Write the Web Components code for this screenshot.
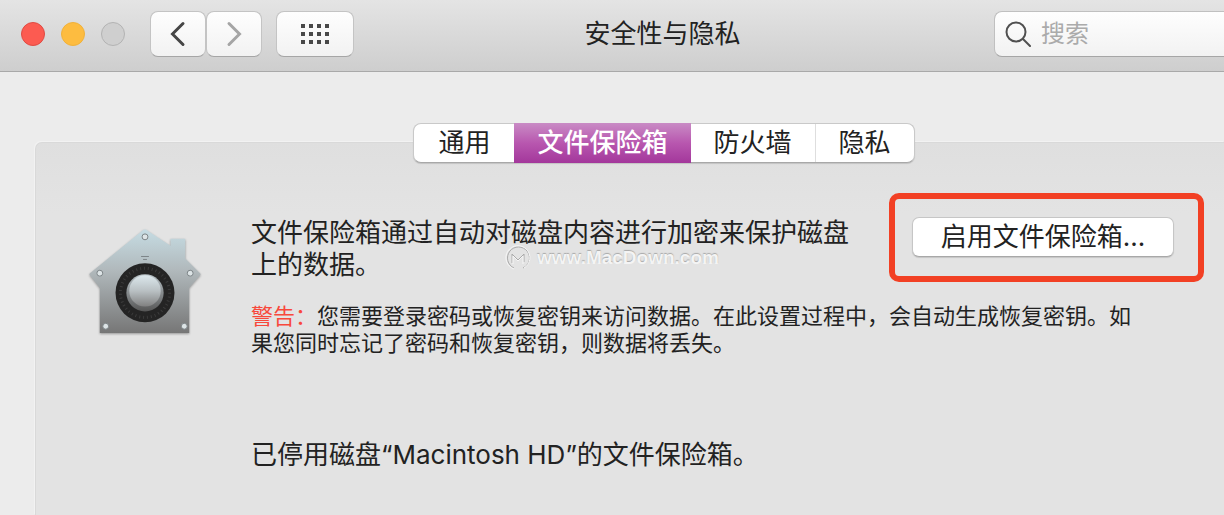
<!DOCTYPE html>
<html lang="zh-CN">
<head>
<meta charset="utf-8">
<title>安全性与隐私</title>
<style>
  html, body { height: 100%; margin: 0; }
  body { background: #ececec; color: #222; overflow: hidden; font: 26px/32px Inter, "Noto Sans CJK SC", sans-serif; }
</style>
</head>
<body>
<prefs-window>
  <prefs-toolbar slot="toolbar">安全性与隐私</prefs-toolbar>
  <prefs-tabs slot="tabs"></prefs-tabs>
  <filevault-pane></filevault-pane>
</prefs-window>

<template id="window-template">
  <style>
    :host { display: flex; flex-direction: column; min-height: 100vh; }
    .tabs { display: flex; justify-content: center; padding: 51px 0 0 104px; position: relative; z-index: 1; }
    main { flex: 1; display: flex; flex-direction: column; margin: -21px 0 0 35px; background: linear-gradient(#dfdfdf, #e3e3e3 70px); border: 1px solid #d9d9d9; border-width: 1px 0 0 1px; border-radius: 7px 0 0 0; box-shadow: -1px -1px 0 #f2f2f2; }
  </style>
  <slot name="toolbar"></slot>
  <div class="tabs"><slot name="tabs"></slot></div>
  <main><slot></slot></main>
</template>

<template id="toolbar-template">
  <style>
    :host { display: block; }
    header { display: flex; align-items: center; height: 72px; padding: 0 0 3px 21px; background: linear-gradient(#e4e4e4, #cecece); border-bottom: 1px solid #a9a9a9; box-sizing: border-box; }
    .lights { display: flex; gap: 16px; margin-right: 25px; }
    .lights button { width: 24px; height: 24px; padding: 0; border-radius: 50%; border: 1px solid #b3b3b3; background: #cfcfcf; }
    .lights .close { background: #fc5b51; border-color: #df4b43; }
    .lights .min { background: #fdbc40; border-color: #f0b13b; }
    .tool { display: grid; place-items: center; height: 46px; width: 56px; padding: 0; box-sizing: border-box; border: 1px solid #c4c4c4; border-bottom-color: #a6a6a6; border-radius: 8px; background: linear-gradient(#fefefe, #f2f2f2); }
    .all { width: 78px; margin-left: 14px; }
    h1 { flex: 1; margin: 0 23px 0 0; font-size: 26px; line-height: 32px; font-weight: 400; text-align: center; }
    .search { display: flex; align-items: center; gap: 10px; width: 230px; height: 46px; padding-left: 10px; box-sizing: border-box; border: 1px solid #c0c0c0; border-right: 0; border-bottom-color: #a6a6a6; border-radius: 8px 0 0 8px; background: linear-gradient(#fefefe, #f2f2f2); }
    input { flex: 1; min-width: 0; padding: 0; border: 0; outline: 0; background: none; color: #222; font: inherit; font-size: 24px; line-height: 32px; }
    input::placeholder { color: #ababab; opacity: 1; }
    svg { display: block; flex: none; }
  </style>
  <header>
    <div class="lights">
      <button class="close" aria-label="关闭"></button>
      <button class="min" aria-label="最小化"></button>
      <button disabled aria-label="缩放"></button>
    </div>
    <button class="tool" aria-label="后退"><svg width="16" height="26" viewBox="0 0 16 26" fill="none" stroke="#464646" stroke-width="3" stroke-linecap="round"><path d="M13 2.5 2.5 13 13 23.500"/></svg></button>
    <button class="tool" aria-label="前进"><svg width="16" height="26" viewBox="0 0 16 26" fill="none" stroke="#a5a5a5" stroke-width="3" stroke-linecap="round"><path d="M3 2.500 13.500 13 3 23.500"/></svg></button>
    <button class="tool all" aria-label="显示全部"><svg width="28" height="20" viewBox="0 0 28 20" fill="none" stroke="#484848" stroke-width="4" stroke-dasharray="4 4"><path d="M0 2h28M0 10h28M0 18h28"/></svg></button>
    <h1><slot></slot></h1>
    <label class="search">
      <svg width="26" height="26" viewBox="0 0 26 26" fill="none" stroke="#505050" stroke-width="2" stroke-linecap="round"><circle cx="11" cy="11" r="9.500"/><path d="m18 18 7 7"/></svg>
      <input type="text" placeholder="搜索" aria-label="搜索">
    </label>
  </header>
</template>

<template id="tabs-template">
  <style>
    :host { display: block; }
    div { display: flex; height: 38px; border: 1px solid #c9c9c9; border-bottom-color: #a8a8a8; border-radius: 8px; background: #fff; box-shadow: 0 1px 1px #0002; }
    button { padding: 0 24px; border: 0; background: none; color: #222; font: inherit; line-height: 38px; }
    button + button { padding: 0 23px; }
    button[aria-selected=true] { margin: -1px 0; background: linear-gradient(#c98bc5, #b857af 50%, #a3379b); color: #fff; font-weight: 500; line-height: 40px; }
    button:last-child { border-left: 1px solid #dedede; }
  </style>
  <div role="tablist">
    <button role="tab" aria-selected="false">通用</button>
    <button role="tab" aria-selected="true">文件保险箱</button>
    <button role="tab" aria-selected="false">防火墙</button>
    <button role="tab" aria-selected="false">隐私</button>
  </div>
</template>

<template id="pane-template">
  <style>
    :host { display: grid; grid-template-columns: 112px minmax(0, 1fr); column-gap: 50px; padding: 74px 50px 0 53px; align-items: start; }
    vault-icon { margin-top: 11px; }
    .intro { display: flex; justify-content: space-between; align-items: flex-start; gap: 50px; position: relative; }
    p { margin: 0; }
    .intro p { flex: 1; max-width: 612px; }
    .warning { margin: 22px 24px 82px 0; font-size: 22px; line-height: 27px; }
    strong { font-weight: 400; color: #f8483c; }
    site-mark { position: absolute; left: 254px; top: 28px; }
  </style>
  <vault-icon></vault-icon>
  <div>
    <div class="intro">
      <p>文件保险箱通过自动对磁盘内容进行加密来保护磁盘上的数据。</p>
      <marked-button>启用文件保险箱...</marked-button>
      <site-mark>www.MacDown.com</site-mark>
    </div>
    <p class="warning"><strong>警告：</strong>您需要登录密码或恢复密钥来访问数据。在此设置过程中，会自动生成恢复密钥。如果您同时忘记了密码和恢复密钥，则数据将丢失。</p>
    <p>已停用磁盘“Macintosh HD”的文件保险箱。</p>
  </div>
</template>

<template id="button-template">
  <style>
    :host { display: block; position: relative; }
    :host::after { content: ""; position: absolute; inset: -24px -30px -25px -23px; border: 6px solid #f24024; border-radius: 10px; pointer-events: none; }
    button { display: block; width: 262px; height: 40px; padding: 0; border: 1px solid #c6c6c6; border-bottom-color: #a8a8a8; border-radius: 7px; background: #fff; box-shadow: 0 1px 1px #0002; color: #222; font: inherit; line-height: 38px; white-space: nowrap; }
  </style>
  <button><slot></slot></button>
</template>

<template id="mark-template">
  <style>
    :host { display: flex; align-items: center; gap: 6px; color: #f4f4f4; font: bold 19px/26px "Liberation Sans", sans-serif; text-shadow: 0 -1px 1px #a8a8a8; pointer-events: none; }
  </style>
  <svg width="26" height="26" viewBox="0 0 26 26" fill="none"><g stroke="#aaa"><path d="M9 23A11 11 0 1 1 18 23"/><path d="M7 18V9l6 6 6-6v8"/></g><g stroke="#f6f6f6"><path d="M9 24A12 12 0 1 1 19 23"/><path d="M8 19v-8l5 5 5-5v8"/></g></svg>
  <span><slot></slot></span>
</template>

<template id="vault-template">
  <style>:host { display: block; } svg { display: block; width: 100%; filter: drop-shadow(0 1px 1px #0005); }</style>
  <svg viewBox="0 0 114 114" role="img" aria-label="文件保险箱">
    <defs>
      <linearGradient id="wall" x1="0" y1="0" x2="0" y2="1"><stop offset="0" stop-color="#c6dce3"/><stop offset=".4" stop-color="#b0b8bb"/><stop offset="1" stop-color="#767676"/></linearGradient>
      <linearGradient id="knob" x1="0" y1="0" x2="0" y2="1"><stop offset="0" stop-color="#dce8ed"/><stop offset=".5" stop-color="#b9c0c3"/><stop offset="1" stop-color="#808080"/></linearGradient>
      <linearGradient id="rim" x1="0" y1="0" x2="0" y2="1"><stop offset="0" stop-color="#b8c2c7"/><stop offset="1" stop-color="#555"/></linearGradient>
    </defs>
    <path d="M54 3q3-3 6 0l23 15v-7h15v20l15 15q1 1 0 2l-11 13v46H11V61L1 48q-1-1 0-2z" fill="url(#wall)"/>
    <path d="M53 29h8M55 32h4" stroke="#7c8487"/>
    <circle cx="57" cy="66" r="30" fill="#242424"/>
    <circle cx="57" cy="66" r="25" fill="none" stroke="#3c3c3c" stroke-width="3" stroke-dasharray="1 3"/>
    <circle cx="57" cy="66" r="19" fill="url(#rim)"/>
    <circle cx="57" cy="64" r="16" fill="url(#knob)"/>
    <g fill="#dde4e6" stroke="#7b8386"><circle cx="57" cy="9" r="3"/><circle cx="11" cy="46" r="3"/><circle cx="103" cy="46" r="3"/><circle cx="17" cy="100" r="3"/><circle cx="97" cy="100" r="3"/></g>
  </svg>
</template>

<script>
  const define = (name, templateId) => customElements.define(name, class extends HTMLElement {
    constructor() {
      super();
      this.attachShadow({ mode: "open" }).append(document.getElementById(templateId).content.cloneNode(true));
    }
  });
  define("vault-icon", "vault-template");
  define("marked-button", "button-template");
  define("site-mark", "mark-template");
  define("prefs-toolbar", "toolbar-template");
  define("prefs-tabs", "tabs-template");
  define("filevault-pane", "pane-template");
  define("prefs-window", "window-template");
</script>
</body>
</html>
